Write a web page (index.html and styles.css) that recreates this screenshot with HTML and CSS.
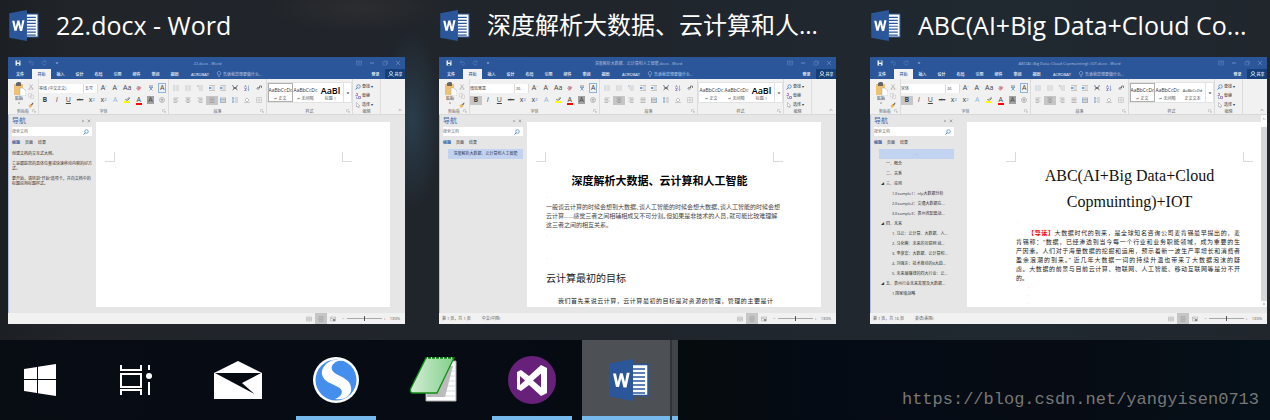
FILE: index.html
```html
<!DOCTYPE html>
<html lang="zh-CN">
<head>
<meta charset="utf-8">
<meta name="viewport" content="width=device-width, initial-scale=1">
<title>Taskbar previews</title>
<link rel="stylesheet" href="styles.css">
<script src="app.js" defer></script>
</head>
<body>
<svg class="sprite" aria-hidden="true">
  <symbol id="word" viewBox="0 0 40 42">
    <path d="M22 5.500H39V36.500H22z" fill="#fff" stroke="#2b579a" stroke-width="1.500"/>
    <path d="M24 10h12M24 14h12M24 18h12M24 22h12M24 26h12M24 30h12M24 34h12" stroke="#2b579a" stroke-width="1.600"/>
    <path d="M0 4.500L24 0V42L0 37.500z" fill="#2b579a"/>
    <path d="M4 14.500h3l1.800 8.500 2.200-8.800h2.700l2.300 9 1.700-9.400h3L17.500 28.500h-3L12.200 19.500 10 28h-3z" fill="#fff"/>
  </symbol>
  <symbol id="save" viewBox="0 0 12 12"><path d="M1 1h10v10H1z" fill="#e8eef8"/><path d="M4 1v4h5V1M4 11V8h4v3" fill="#2b579a"/></symbol>
  <symbol id="undo" viewBox="0 0 12 12"><path d="M2 4h6a3 3 0 0 1 0 6H6M5 1L2 4l3 3" fill="none" stroke="#5179b8" stroke-width="1.500"/></symbol>
  <symbol id="redo" viewBox="0 0 12 12"><path d="M9 3a4 4 0 1 0 1 4M10 1v3H6" fill="none" stroke="#5179b8" stroke-width="1.500"/></symbol>
  <symbol id="caret" viewBox="0 0 12 12"><path d="M3 5h6L6 8z" fill="currentColor"/></symbol>
  <symbol id="display" viewBox="0 0 12 12"><path d="M1 2h10v8H1zM1 4h10M6 9V6M4 7l2-2 2 2" fill="none" stroke="#6486bf"/></symbol>
  <symbol id="min" viewBox="0 0 12 12"><path d="M2 6h8" stroke="#809fcf" stroke-width="1.500"/></symbol>
  <symbol id="max" viewBox="0 0 12 12"><path d="M2 4h7v6H2zM4 4V2h7v6H9" fill="none" stroke="#6486bf"/></symbol>
  <symbol id="close" viewBox="0 0 12 12"><path d="M2 2l8 8M10 2l-8 8" stroke="#7593c6" stroke-width="1.200"/></symbol>
  <symbol id="bulb" viewBox="0 0 12 12"><path d="M4.500 8C1 5 3 1 6 1s5 4 1.500 7zM4.500 10h3M5 11.500h2" fill="none" stroke="#a9c0e2" stroke-width="1.200"/></symbol>
  <symbol id="person" viewBox="0 0 12 12"><circle cx="6" cy="4" r="3" fill="none" stroke="#fff" stroke-width="1.300"/><path d="M1 11c1-4 9-4 10 0" fill="none" stroke="#fff" stroke-width="1.300"/></symbol>
  <symbol id="paste" viewBox="0 0 13 14"><path d="M1 2h9v11H1z" fill="#edc274"/><path d="M3 1l2-1h2l1 1v3H3z" fill="#666"/><path d="M7 6h3l3 3v5H7z" fill="#fff" stroke="#aaa" stroke-width=".5"/></symbol>
  <symbol id="cut" viewBox="0 0 12 12"><path d="M3 1l6 8M9 1L3 9" stroke="#aaa" stroke-width="1.500"/><circle cx="3" cy="10" r="1.500" fill="none" stroke="#aaa"/><circle cx="9" cy="10" r="1.500" fill="none" stroke="#aaa"/></symbol>
  <symbol id="copy" viewBox="0 0 12 12"><path d="M1 1h6v7H1zM5 4h6v7H5z" fill="#f4f4f4" stroke="#c5bfc5"/></symbol>
  <symbol id="brush" viewBox="0 0 12 12"><path d="M1 7l4-3 4 4-5 4z" fill="#f0b659"/><path d="M6 5l4-4 1 1-3 5z" fill="#555"/></symbol>
  <symbol id="eraser" viewBox="0 0 12 12"><path d="M2 8l5-6 4 3-5 6H3z" fill="#e78d9c"/><path d="M1 8l3-6 3 6" fill="none" stroke="#666"/></symbol>
  <symbol id="wen" viewBox="0 0 12 12"><path d="M2 2h8" stroke="#666" stroke-width="1.500"/><path d="M2 5h8M3 11l6-6M9 11L3 5" stroke="#4b83c4" stroke-width="1.300"/></symbol>
  <symbol id="marker" viewBox="0 0 12 12"><path d="M0 8h12v4H0z" fill="#ff0"/><path d="M2 6c2-3 3 3 4-1l4-4 1 2-4 4" fill="none" stroke="#555" stroke-width="1.500"/></symbol>
  <symbol id="ring" viewBox="0 0 12 12"><circle cx="6" cy="6" r="5" fill="none" stroke="#888"/><path d="M3 5h6M6 3v6M4 8h4" stroke="#888"/></symbol>
  <symbol id="bullets" viewBox="0 0 12 12"><path d="M1 2h2M1 6h2M1 10h2" stroke="#5b8bc5" stroke-width="1.500"/><path d="M5 2h7M5 6h7M5 10h7" stroke="#aaa"/></symbol>
  <symbol id="multi" viewBox="0 0 12 12"><path d="M0 2h3M3 6h2M5 10h2" stroke="#5b8bc5" stroke-width="1.500"/><path d="M4 2h8M6 6h6M8 10h4" stroke="#aaa"/></symbol>
  <symbol id="indent" viewBox="0 0 12 12"><path d="M0 1h12M6 4h6M6 8h6M0 11h12" stroke="#999"/><path d="M0 6h5M3 4L1 6l2 2" fill="none" stroke="#3d7cc4" stroke-width="1.800"/></symbol>
  <symbol id="asian" viewBox="0 0 12 12"><path d="M1 2l10 8M11 2L1 10M2 6h8" stroke="#555" stroke-width="1.600"/><path d="M0 1h3M9 1h3" stroke="#3d7cc4"/></symbol>
  <symbol id="sort" viewBox="0 0 12 12"><path d="M1 5l2-4 2 4M1 7h4l-4 4h4" fill="none" stroke="#8959a8" stroke-width="1.300"/><path d="M9 1v10M7 9l2 2 2-2" fill="none" stroke="#3d7cc4"/></symbol>
  <symbol id="mark" viewBox="0 0 12 12"><path d="M11 2H7v4M3 6h5M5 4L2 7l3 3M11 2v4" fill="none" stroke="#555" stroke-width="1.400"/></symbol>
  <symbol id="left" viewBox="0 0 12 12"><path d="M1 2h10M1 5h7M1 8h10M1 11h7" stroke="#888"/></symbol>
  <symbol id="center" viewBox="0 0 12 12"><path d="M1 2h10M3 5h6M1 8h10M3 11h6" stroke="#777"/></symbol>
  <symbol id="right" viewBox="0 0 12 12"><path d="M1 2h10M4 5h7M1 8h10M4 11h7" stroke="#888"/></symbol>
  <symbol id="full" viewBox="0 0 12 12"><path d="M1 2h10M1 5h10M1 8h10M1 11h10" stroke="#888"/></symbol>
  <symbol id="spread" viewBox="0 0 12 12"><path d="M1 1v11M11 1v11" stroke="#3d7cc4"/><path d="M2 2h8M2 5h8M2 8h8M2 11h8" stroke="#777"/></symbol>
  <symbol id="spacing" viewBox="0 0 12 12"><path d="M2 1v10M0 3l2-2 2 2M0 9l2 2 2-2" fill="none" stroke="#3d7cc4" stroke-width="1.300"/><path d="M6 2h6M6 6h6M6 10h6" stroke="#888"/></symbol>
  <symbol id="fill" viewBox="0 0 12 12"><path d="M2 6l4-4 4 4-4 4z" fill="#fff" stroke="#888"/><path d="M0 11h12" stroke="#bbb" stroke-width="1.500"/></symbol>
  <symbol id="border" viewBox="0 0 12 12"><path d="M1 1h10v10H1zM6 1v10M1 6h10" fill="none" stroke="#b5b5b5"/></symbol>
  <symbol id="find" viewBox="0 0 12 12"><circle cx="7" cy="5" r="3.500" fill="none" stroke="#3d7cc4" stroke-width="1.400"/><path d="M4.500 7.500L1 11" stroke="#3d7cc4" stroke-width="1.800"/></symbol>
  <symbol id="swap" viewBox="0 0 12 12"><path d="M1 5h4V1H2M7 11h4V7H7z" fill="none" stroke="#8959a8" stroke-width="1.400"/><path d="M3 7v4h3" fill="none" stroke="#3d7cc4"/></symbol>
  <symbol id="pointer" viewBox="0 0 12 12"><path d="M3 1v9l2-2 2 4 1-1-1-3h3z" fill="#fff" stroke="#999"/></symbol>
  <symbol id="launch" viewBox="0 0 12 12"><path d="M2 9V2h7M6 6l4 4M10 6v4H6" fill="none" stroke="#999" stroke-width="1.300"/></symbol>
  <symbol id="up" viewBox="0 0 12 12"><path d="M2 8l4-4 4 4" fill="none" stroke="#666" stroke-width="1.600"/></symbol>
  <symbol id="x" viewBox="0 0 12 12"><path d="M2 2l8 8M10 2l-8 8" stroke="#777" stroke-width="1.600"/></symbol>
  <symbol id="book" viewBox="0 0 12 12"><path d="M1 2h10v8H1zM6 2v8M2 5h3M7 5h3M2 7h3M7 7h3" fill="none" stroke="#a5a5a5"/></symbol>
  <symbol id="print" viewBox="0 0 12 12"><path d="M2 1h8v10H2zM3 4h6M3 6h6M3 8h6" fill="none" stroke="#999"/></symbol>
  <symbol id="web" viewBox="0 0 12 12"><path d="M1 2h10v8H1zM2 5h5" fill="none" stroke="#999"/><circle cx="8" cy="8" r="2.500" fill="#888"/></symbol>
</svg>

<template id="window-head">
  <header class="titlebar">
    <div class="quick">
      <button aria-label="保存"><svg><use href="#save"/></svg></button>
      <button aria-label="撤消"><svg><use href="#undo"/></svg></button>
      <button aria-label="恢复"><svg><use href="#redo"/></svg></button>
      <button aria-label="自定义"><svg><use href="#caret"/></svg></button>
    </div>
    <span class="caption"></span>
    <div class="quick controls">
      <button aria-label="功能区显示选项"><svg><use href="#display"/></svg></button>
      <button aria-label="最小化"><svg><use href="#min"/></svg></button>
      <button aria-label="最大化"><svg><use href="#max"/></svg></button>
      <button aria-label="关闭"><svg><use href="#close"/></svg></button>
    </div>
  </header>
  <nav class="tabs">
    <button class="file">文件</button><button class="active">开始</button><button>插入</button><button>设计</button><button>布局</button><button>引用</button><button>邮件</button><button>审阅</button><button>视图</button><button class="wide">ACROBAT</button>
    <button class="tell"><svg><use href="#bulb"/></svg>告诉我您想要做什么...</button>
    <button class="login">登录</button>
    <button class="share"><svg><use href="#person"/></svg>共享</button>
  </nav>
  <div class="ribbon">
    <section class="group clipboard">
      <div class="clip">
        <button class="paste"><svg><use href="#paste"/></svg>粘贴<svg class="tiny"><use href="#caret"/></svg></button>
        <div class="stack">
          <button aria-label="剪切"><svg><use href="#cut"/></svg></button>
          <button aria-label="复制"><svg><use href="#copy"/></svg></button>
          <button aria-label="格式刷"><svg><use href="#brush"/></svg></button>
        </div>
      </div>
      <footer>剪贴板<svg><use href="#launch"/></svg></footer>
    </section>
    <section class="group font">
      <div class="row">
        <select class="family" aria-label="字体"><option></option></select>
        <select class="size" aria-label="字号"><option></option></select>
        <button aria-label="增大字号">A<sup>ˆ</sup></button>
        <button aria-label="减小字号">A<sup>ˇ</sup></button>
        <button aria-label="更改大小写">Aa</button>
        <button aria-label="清除格式"><svg><use href="#eraser"/></svg></button>
        <button aria-label="拼音指南"><svg><use href="#wen"/></svg></button>
        <button aria-label="字符边框"><span class="boxed">A</span></button>
      </div>
      <div class="row">
        <button class="bold" aria-label="加粗"><b>B</b></button>
        <button aria-label="倾斜"><i>I</i></button>
        <button aria-label="下划线"><u>U</u></button>
        <button class="strike" aria-label="删除线"><s>abc</s></button>
        <button aria-label="下标">x<sub>2</sub></button>
        <button aria-label="上标">x<sup>2</sup></button>
        <button class="effect" aria-label="文本效果">A</button>
        <button aria-label="突出显示"><svg><use href="#marker"/></svg></button>
        <button aria-label="字体颜色"><span class="red">A</span></button>
        <button aria-label="字符底纹"><span class="shade">A</span></button>
        <button aria-label="带圈字符"><svg><use href="#ring"/></svg></button>
      </div>
      <footer>字体<svg><use href="#launch"/></svg></footer>
    </section>
    <section class="group para">
      <div class="row">
        <button aria-label="项目符号"><svg><use href="#bullets"/></svg></button>
        <button aria-label="编号"><svg><use href="#bullets"/></svg></button>
        <button aria-label="多级列表"><svg><use href="#multi"/></svg></button>
        <button aria-label="减少缩进"><svg><use href="#indent"/></svg></button>
        <button aria-label="增加缩进"><svg><use href="#indent"/></svg></button>
        <button aria-label="中文版式"><svg><use href="#asian"/></svg></button>
        <button aria-label="排序"><svg><use href="#sort"/></svg></button>
        <button aria-label="编辑标记"><svg><use href="#mark"/></svg></button>
      </div>
      <div class="row">
        <button aria-label="左对齐"><svg><use href="#left"/></svg></button>
        <button class="align-center" aria-label="居中"><svg><use href="#center"/></svg></button>
        <button aria-label="右对齐"><svg><use href="#right"/></svg></button>
        <button class="align-full" aria-label="两端对齐"><svg><use href="#full"/></svg></button>
        <button aria-label="分散对齐"><svg><use href="#spread"/></svg></button>
        <button aria-label="行距"><svg><use href="#spacing"/></svg></button>
        <button aria-label="底纹"><svg><use href="#fill"/></svg></button>
        <button aria-label="边框"><svg><use href="#border"/></svg></button>
      </div>
      <footer>段落<svg><use href="#launch"/></svg></footer>
    </section>
    <section class="group styles">
      <div class="gallery">
        <button class="style first"><span>AaBbCcDc</span>↵ 正文</button>
        <button class="style"><span>AaBbCcDc</span>↵ 无间隔</button>
        <button class="style third"><span></span><em></em></button>
        <button class="more" aria-label="其他"><svg><use href="#caret"/></svg></button>
      </div>
      <footer>样式<svg><use href="#launch"/></svg></footer>
    </section>
    <section class="group edit">
      <div class="stack">
        <button><svg><use href="#find"/></svg>查找 ▾</button>
        <button><svg><use href="#swap"/></svg>替换</button>
        <button><svg><use href="#pointer"/></svg>选择 ▾</button>
      </div>
      <footer>编辑</footer>
    </section>
    <button class="collapse" aria-label="折叠功能区"><svg><use href="#up"/></svg></button>
  </div>
</template>

<template id="pane-head">
  <div class="pane-title"><h2>导航</h2><button aria-label="选项"><svg><use href="#caret"/></svg></button><button aria-label="关闭"><svg><use href="#x"/></svg></button></div>
  <div class="search"><input type="search" placeholder="搜索文档" aria-label="搜索文档"><svg><use href="#find"/></svg></div>
  <div class="pane-tabs"><button class="current">标题</button><button>页面</button><button>结果</button></div>
</template>

<template id="window-foot">
  <footer class="status">
    <span class="pages"></span><span class="lang"></span>
    <div class="views">
      <button aria-label="阅读视图"><svg><use href="#book"/></svg></button>
      <button class="pressed" aria-label="页面视图"><svg><use href="#print"/></svg></button>
      <button aria-label="Web 版式"><svg><use href="#web"/></svg></button>
    </div>
    <span>−</span><input type="range" aria-label="缩放" value="50"><span>+</span><span class="zoom">130%</span>
  </footer>
</template>

<main class="previews">
  <article class="preview">
    <h1><svg><use href="#word"/></svg><span>22.docx - Word</span></h1>
    <div class="window" data-doc="blank">
      <div class="work">
        <aside class="pane">
          <div class="help">
            <p>创建文档的交互式大纲。</p>
            <p>它是跟踪您的具体位置或快速移动内容的好方式。</p>
            <p>要开始，请转到“开始”选项卡，并向文档中的标题应用标题样式。</p>
          </div>
        </aside>
        <div class="canvas"><div class="page">
          <div class="marks"><i></i><i></i></div>
          <div class="body"><p class="dot">.</p></div>
        </div></div>
      </div>
    </div>
  </article>

  <article class="preview">
    <h1 class="cjk"><svg><use href="#word"/></svg><span>深度解析大数据、云计算和人...</span></h1>
    <div class="window" data-doc="bigdata">
      <div class="work">
        <aside class="pane">
          <ul class="outline"><li class="selected">深度解析大数据、云计算和人工智能</li></ul>
        </aside>
        <div class="canvas"><div class="page">
          <div class="marks"><i></i><i></i></div>
          <div class="body essay">
            <h3>深度解析大数据、云计算和人工智能</h3>
            <p class="dot">.</p>
            <p class="intro">一般谈云计算的时候会想到大数据、谈人工智能的时候会想大数据、谈人工智能的时候会想<br>云计算……感觉三者之间相辅相成又不可分割。但如果是非技术的人员，就可能比较难理解<br>这三者之间的相互关系。</p>
            <p class="dot">.</p>
            <p class="dot gap">.</p>
            <h4>云计算最初的目标</h4>
            <p class="line first-line">我们首先来说云计算，云计算最初的目标是对资源的管理，管理的主要是计</p>
          </div>
        </div></div>
      </div>
    </div>
  </article>

  <article class="preview">
    <h1><svg><use href="#word"/></svg><span>ABC(AI+Big Data+Cloud Co...</span></h1>
    <div class="window" data-doc="abc">
      <div class="work">
        <aside class="pane roomy">
          <ul class="outline">
            <li class="selected">.</li>
            <li>一、概念</li>
            <li>二、关系</li>
            <li class="open">三、应用</li>
            <li class="sub">1.Example1：nlp大数据分析</li>
            <li class="sub">2.Example2：交通大数据在...</li>
            <li class="sub">3.Example3：贵州省配套战...</li>
            <li class="open">四、未来</li>
            <li class="sub">1. 马云：云计算、大数据、人...</li>
            <li class="sub">2. 马化腾：未来的互联网 就...</li>
            <li class="sub">3. 李彦宏：大数据、云计算和...</li>
            <li class="sub">4. 刘强东：技术推动的8大趋...</li>
            <li class="sub">5. 未来最赚钱的四大行业：云...</li>
            <li class="open">五、贵州行业未来发展及大数据...</li>
            <li class="sub">1.国家级战略</li>
          </ul>
        </aside>
        <div class="canvas scrolled"><div class="page wide-margin">
          <div class="marks"><i></i><i></i></div>
          <div class="body report">
            <h3>ABC(AI+Big Data+Cloud<br>Copmuinting)+IOT</h3>
            <p class="dot">.</p>
            <p class="line first-line"><strong>【导读】</strong>大数据时代的到来，是全球知名咨询公司麦肯锡最早提出的，麦</p>
            <p class="line">肯锡称：“数据，已经渗透到当今每一个行业和业务职能领域，成为重要的生</p>
            <p class="line">产因素。人们对于海量数据的挖掘和运用，预示着新一波生产率增长和消费者</p>
            <p class="line">盈余浪潮的到来。” 近几年大数据一词的持续升温也带来了大数据泡沫的疑</p>
            <p class="line">虑。大数据的前景与目前云计算、物联网、人工智能、移动互联网等是分不开</p>
            <p class="line last">的。</p>
            <p class="dot">.</p><p class="dot">.</p><p class="dot">.</p>
          </div>
        </div>
        <div class="scrollbar"><button aria-label="向上"><svg><use href="#up"/></svg></button><span></span><button aria-label="向下"><svg><use href="#caret"/></svg></button></div>
        </div>
      </div>
    </div>
  </article>
</main>

<footer class="taskbar">
  <div class="system">
    <button aria-label="开始"><svg width="32" height="32" viewBox="0 0 32 32"><path d="M0 5l13-2v12H0zM14 2.800L32 0v15H14zM0 16h13v13L0 27zM14 16h18v16l-18-2.800z" fill="#fff"/></svg></button>
    <button aria-label="任务视图"><svg width="32" height="30" viewBox="0 0 32 30"><path d="M1 0v5h20V0M1 9h20v13H1zM1 30v-5h20v5M29 0v5M29 17v13" fill="none" stroke="#fff" stroke-width="2"/><circle cx="29" cy="11" r="3" fill="#fff"/></svg></button>
  </div>
  <div class="apps">
    <button aria-label="邮件"><svg width="48" height="38" viewBox="0 0 48 38"><path d="M0 12L24 0l24 12v26H0z" fill="#fff"/><path d="M1 12h46L28 22l12.500 11z" fill="#060a11"/></svg></button>
    <button class="running" aria-label="搜狗浏览器"><svg width="48" height="48" viewBox="0 0 48 48"><circle cx="24" cy="24" r="23" fill="#fff"/><circle cx="24" cy="24" r="20.500" fill="#448eed"/><path d="M40 9C33 2 21 2 14 8c-8 8-3 16 4 19l8 4c6 3 5 9-3 12 13 2 19-7 15-15-2-4-6-6-12-9-9-4-8-11 0-14 5-1 9 0 14 4z" fill="#fff"/></svg></button>
    <button aria-label="记事本"><svg width="50" height="48" viewBox="0 0 50 48"><path d="M17 5h30v40H17z" fill="#fff" stroke="#aaa"/><path d="M22 15h24M22 20h24M19 25h27M19 30h27M19 35h27M19 40h27" stroke="#d4dce0"/><path d="M34 10h10l-8 31H18V36z" fill="#bbb"/><defs><linearGradient id="green"><stop stop-color="#d3edd5"/><stop offset="1" stop-color="#83cf8c"/></linearGradient></defs><path d="M17 2h28L28 37H4c-3 0-3-3-2-5z" fill="url(#green)" stroke="#158b19" stroke-width="1.300"/><path d="M18 2h27" stroke="#dff" stroke-width="1.300" stroke-dasharray="1 3"/></svg></button>
    <button class="running" aria-label="Visual Studio"><svg width="48" height="48" viewBox="0 0 48 48"><circle cx="24" cy="24" r="24" fill="#68217a"/><path d="M9 16l4-2 8 6L33 9l6 3v25l-6 3-12-11-8 6-4-2zM12 20v9l5-4.500zM25 24.500l8 7v-14z" fill="#fff" fill-rule="evenodd"/></svg></button>
  </div>
  <div class="word-stack"><button class="running hot" aria-label="Word"><svg width="40" height="42"><use href="#word"/></svg></button><span></span></div>
  <p class="watermark">https://blog.csdn.net/yangyisen0713</p>
</footer>
</body>
</html>
```
FILE: styles.css
```css
* { box-sizing: border-box; }
body {
  margin: 0;
  min-height: 100vh;
  display: flex;
  flex-direction: column;
  background: #060a11;
  color: #333;
  font-family: "Open Sans", "Noto Sans CJK SC", sans-serif;
  overflow-x: hidden;
}
h1, h2, h3, h4, p, ul { margin: 0; padding: 0; font-weight: 400; }
button, input, select { font: inherit; color: inherit; border: 0; padding: 0; margin: 0; background: none; border-radius: 0; appearance: none; min-width: 0; }
button { display: flex; align-items: center; justify-content: center; white-space: nowrap; }
.sprite { display: none; }

.previews {
  flex: 1;
  display: grid;
  grid-template-columns: repeat(3, minmax(0, 1fr));
  gap: 34px;
  padding: 0 3px 16px 8px;
  background:
    radial-gradient(ellipse 30px 90px at 412px 120px, #2a3d4c, transparent),
    radial-gradient(ellipse 90px 24px at 360px 8px, #2c2d2f, transparent),
    linear-gradient(90deg, #1c2024, #21252a 6%, #20252c 50%, #202930 80%, #20262c);
}
.preview { display: flex; flex-direction: column; }
.preview h1 { display: flex; align-items: center; gap: 17px; height: 57px; padding: 0 0 7px 1px; color: #fff; font-size: 25px; line-height: 36px; white-space: nowrap; }
.preview h1.cjk { font-size: 24px; }
.preview h1 svg { width: 30px; height: 31px; flex: none; }

.window { flex: 1; display: flex; flex-direction: column; background: #e6e6e6; font-size: 4px; line-height: 5px; }
.window svg { width: 6px; height: 6px; flex: none; }

.titlebar { display: grid; grid-template-columns: 1fr auto 1fr; align-items: center; height: 12px; padding: 0 1px 0 3px; background: #2b579a; color: #a9bedf; }
.quick { display: flex; }
.quick button { width: 13px; }
.controls { justify-content: flex-end; }
.tabs { display: flex; height: 10px; background: #2b579a; color: #fff; font-weight: 500; }
.tabs button { width: 19px; }
.tabs .file { width: 24px; }
.tabs .active { background: #f3f3f3; color: #2b579a; }
.tabs .wide { width: 32px; }
.tabs .tell { width: auto; gap: 1px; color: #a9c0e2; }
.tabs .login { margin-left: auto; }
.tabs .share { width: 20px; gap: 1px; background: #143f78; }

.ribbon { display: flex; height: 36px; background: #f1f1f1; border-bottom: 1px solid #d8d8d8; }
.group { position: relative; display: flex; flex-direction: column; padding-top: 3px; border-right: 1px solid #dcdcdc; }
.group footer { display: flex; justify-content: center; align-items: center; height: 5px; margin-top: auto; color: #666; }
.group footer svg { position: absolute; right: 2px; bottom: 1px; width: 4px; height: 4px; }
.row { display: flex; align-items: center; height: 12px; }
.row button { flex: 1; height: 9px; font-size: 7px; line-height: 8px; color: #444; }
.row sup, .row sub { font-size: 4px; line-height: 4px; color: #2f72bf; }
.pressed, .row button.pressed { background: #c6c6c6; }
.clipboard { width: 31px; }
.clip { display: flex; gap: 2px; padding-left: 4px; }
.clip .paste { width: 14px; flex-direction: column; justify-content: flex-start; }
.clip .paste svg { width: 13px; height: 14px; }
.clip .paste .tiny { width: 4px; height: 4px; }
.stack { display: flex; flex-direction: column; }
.stack button { height: 9px; }
.font { width: 130px; }
.font select { height: 9px; background: #fff; border-right: 1px solid #ddd; color: #444; }
.font .family { width: 45px; }
.font .size { width: 14px; padding-left: 1px; }
.boxed { border: 1px solid #90b4d8; padding: 0 1px; }
.row .strike { font-size: 4px; }
.row .effect { color: #8fb6e0; }
.red { border-bottom: 2px solid #f00; line-height: 7px; padding: 0 1px; }
.shade { background: #a0a0a0; padding: 0 1px; }
.para { width: 98px; }
.para .row { padding: 0 1px; }
.styles { width: 86px; }
.gallery { display: flex; height: 21px; background: #fff; border: 1px solid #e2e2e2; }
.gallery .style { width: 25px; flex-direction: column; overflow: hidden; color: #555; }
.gallery .style span { height: 11px; line-height: 11px; font-size: 5px; color: #333; }
.gallery .style em { font-style: normal; }
.gallery .style.chosen { border: 1px solid #b0b0b0; }
.gallery .style.third span { font-size: 4px; }
.gallery .style.heading span { font-size: 9px; font-weight: 600; color: #000; }
.gallery .more { flex: 1; border-left: 1px solid #e2e2e2; }
.edit { width: 28px; }
.edit .stack button { justify-content: flex-start; gap: 1px; padding-left: 2px; }
.collapse { margin-left: auto; align-self: flex-end; width: 11px; height: 8px; }
.ribbon .collapse svg { width: 4px; height: 4px; }

.work { flex: 1; display: flex; border-left: 1px solid #aebfdc; }
.pane { flex: none; width: 87px; padding: 0 4px 0 3px; }
.pane.roomy { width: 96px; padding-right: 13px; }
.pane-title { display: flex; align-items: center; height: 12px; }
.pane-title h2 { flex: 1; font-size: 7px; line-height: 10px; color: #3c6ab0; }
.pane-title svg { width: 4px; height: 4px; }
.pane-title button { width: 6px; }
.search { display: flex; align-items: center; height: 9px; background: #fff; padding-right: 3px; }
.search input { flex: 1; height: 9px; line-height: 9px; }
.search input::placeholder { color: #777; }
.pane-tabs { display: flex; gap: 5px; height: 12px; }
.pane-tabs .current { color: #2b579a; font-weight: 700; }
.help { display: grid; gap: 5px; padding-top: 3px; }
.outline { list-style: none; padding: 1px 0 0 5px; }
.outline li { position: relative; height: 10px; line-height: 10px; padding-left: 7px; white-space: nowrap; }
.outline .sub { padding-left: 13px; }
.outline .selected { background: #c2d3f1; padding: 0; text-align: center; color: #2d3a55; }
.outline .open::before { content: "◢"; position: absolute; left: 2px; font-size: 3px; }

.canvas { flex: 1; min-width: 0; display: flex; padding: 7px 15px 6px 0; }
.canvas.scrolled { padding: 0 0 6px; }
.page { flex: 1; min-width: 0; min-height: 185px; padding: 30px 38px 0 9px; background: #fff; color: #222; }
.scrolled .page { margin-top: 7px; }
.page.wide-margin { padding: 30px 8px 0 39px; }
.marks { display: flex; justify-content: space-between; }
.marks i { width: 10px; height: 10px; border: 0 solid #dadada; border-width: 0 1px 1px 0; }
.marks i:last-child { border-width: 0 0 1px 1px; }
.body { margin: 0 10px; }
.dot { height: 9px; line-height: 9px; color: #999; }
.gap { margin-top: 14px; }
.line { font-size: 6px; line-height: 9px; text-align: justify; text-align-last: justify; padding-right: 3px; }
.line.last { text-align-last: left; }
.first-line { padding-left: 12px; }
.line strong { color: #f00; }
.essay h3 { padding-top: 8px; font-size: 11px; line-height: 22px; font-weight: 700; text-align: center; color: #000; }
.essay .intro { padding-top: 2px; font-size: 6px; line-height: 9px; white-space: nowrap; font-feature-settings: "halt"; color: #444; }
.essay h4 { padding: 6px 0 9px; font-size: 10px; line-height: 20px; }
.essay .line { padding-right: 0; }
.report h3 { padding-top: 1px; font-family: "Liberation Serif", serif; font-size: 16px; line-height: 26px; text-align: center; color: #111; }
.report .dot { height: 8px; line-height: 8px; padding-left: 12px; }
.report h3 + .dot { padding-left: 1px; margin: 3px 0; }
.scrollbar { width: 6px; display: flex; flex-direction: column; background: #fff; padding-top: 1px; }
.scrollbar span { flex: 1; margin-top: 5px; background: #d5d7da; }
.scrollbar button { height: 6px; }
.scrollbar svg { width: 4px; height: 4px; }

.status { display: flex; align-items: center; height: 11px; padding: 0 5px 0 3px; background: #f1f1f1; color: #555; }
.lang { margin-left: 11px; }
.views { display: flex; align-self: stretch; margin: 0 3px 0 auto; }
.views button { width: 12px; }
.status input { width: 35px; height: 5px; margin: 0 2px; background: linear-gradient(#aaa, #aaa) center / 100% 1px no-repeat; }
.status input::-webkit-slider-thumb { appearance: none; width: 1px; height: 5px; background: #555; }
.zoom { margin-left: 4px; }

.taskbar { display: flex; height: 80px; background: linear-gradient(90deg, #080c13, #060b14 40%, #060b0e 55%, #050b15 65%, #070c14 85%, #051019); }
.taskbar button { width: 80px; height: 80px; border-bottom: 4px solid transparent; padding-top: 4px; }
.taskbar .running { border-color: #76b9ed; }
.system { display: flex; gap: 16px; }
.apps { display: flex; gap: 18px; margin-left: 22px; }
.word-stack { display: flex; gap: 2px; margin-left: 10px; background: #303337; }
.taskbar .hot { width: 88px; padding-left: 6px; background: #4d5156; }
.word-stack span { width: 6px; background: #414549; border-bottom: 4px solid #76b9ed; }
.watermark { margin: 50px 11px 0 auto; font-family: "Liberation Mono", monospace; font-size: 17px; line-height: 20px; color: #777876; }
```
FILE: app.js
```js
const documents = {
  blank: {
    caption: "22.docx - Word", family: "等线 (中文正文)", size: "五号",
    pressed: [".align-full"], chosen: true, sample: "AaBl", styleName: "标题 1",
    heading: true, pages: "", lang: ""
  },
  bigdata: {
    caption: "深度解析大数据、云计算和人工智能.docx - Word", family: "微软雅黑", size: "26",
    pressed: [".bold", ".align-center"], chosen: false, sample: "AaBl", styleName: "标题 1",
    heading: true, pages: "第 1 页，共 1 页", lang: "中文(中国)"
  },
  abc: {
    caption: "ABC(AI+Big Data+Cloud Copmuinting)+IOT.docx - Word", family: "宋体", size: "26",
    pressed: [".bold", ".align-center"], chosen: true, sample: "AaBbCcDd", styleName: "正文文本",
    heading: false, pages: "第 1 页，共 16 页", lang: "英语(美国)"
  }
};

const copy = id => document.getElementById(id).content.cloneNode(true);

document.querySelectorAll(".window").forEach(win => {
  const doc = documents[win.dataset.doc];
  win.prepend(copy("window-head"));
  win.querySelector(".pane").prepend(copy("pane-head"));
  win.append(copy("window-foot"));

  const set = (selector, text) => { win.querySelector(selector).textContent = text; };
  set(".caption", doc.caption);
  set(".family option", doc.family);
  set(".size option", doc.size);
  set(".third span", doc.sample);
  set(".third em", doc.styleName);
  set(".pages", doc.pages);
  set(".lang", doc.lang);
  doc.pressed.forEach(selector => win.querySelector(selector).classList.add("pressed"));
  win.querySelector(".first").classList.toggle("chosen", doc.chosen);
  win.querySelector(".third").classList.toggle("heading", doc.heading);
});
```
